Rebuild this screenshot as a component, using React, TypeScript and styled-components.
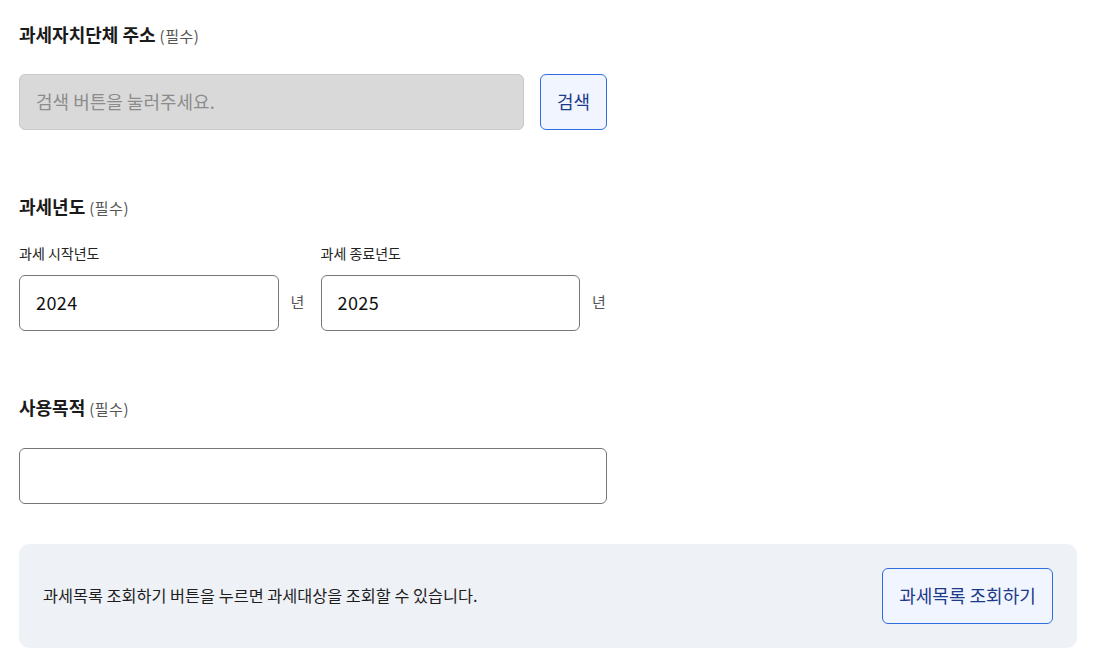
import React from "react";
import styled, { createGlobalStyle } from "styled-components";

const Global = createGlobalStyle`
  html, body { margin: 0; padding: 0; background: #fff; }
  body { font-family: "Noto Sans CJK KR", "Noto Sans", sans-serif; color: #1a1a1a; }
  * { box-sizing: border-box; }
`;

const Page = styled.div`
  padding: 22px 19px 0 19px;
  display: flex;
  flex-direction: column;
`;

const Section = styled.section<{ $gap?: number }>`
  width: 588px;
  display: flex;
  flex-direction: column;
  margin-bottom: ${(p) => p.$gap ?? 64}px;
`;

const Title = styled.div<{ $mb: number }>`
  font-size: 18px;
  font-weight: 700;
  line-height: 24px;
  height: 24px;
  color: #1a1a1a;
  margin-bottom: ${(p) => p.$mb}px;
`;

const Req = styled.span`
  font-size: 15px;
  font-weight: 400;
  line-height: 1;
  color: #555;
  margin-left: 4px;
  letter-spacing: 0.5px;
`;

const Row = styled.div`
  display: flex;
  align-items: center;
  gap: 16px;
`;

const Input = styled.input<{ $disabled?: boolean }>`
  height: 56px;
  flex: 1 1 auto;
  width: 100%;
  min-width: 0;
  border: 1px solid ${(p) => (p.$disabled ? "#c9c9c9" : "#767676")};
  background: ${(p) => (p.$disabled ? "#d9d9d9" : "#fff")};
  border-radius: 6px;
  padding: 0 16px 3px 16px;
  font-family: inherit;
  font-size: 18px;
  letter-spacing: 0.4px;
  color: #111;
  outline: none;
  &::placeholder { color: #8c8c8c; letter-spacing: 0; }
`;

const Button = styled.button<{ $w: number }>`
  height: 56px;
  width: ${(p) => p.$w}px;
  flex: none;
  border: 1px solid #2f6ee0;
  background: #f1f5ff;
  border-radius: 6px;
  font-family: inherit;
  font-size: 18px;
  color: #1d3a8a;
  cursor: pointer;
  padding: 0 0 2px 0;
`;

const YearGrid = styled.div`
  display: grid;
  grid-template-columns: 1fr 1fr;
  gap: 15px;
`;

const YearCol = styled.div`
  display: flex;
  flex-direction: column;
`;

const SubLabel = styled.div`
  font-size: 14px;
  line-height: 20px;
  color: #222;
  margin-bottom: 12px;
`;

const YearRow = styled.div`
  display: flex;
  align-items: center;
  gap: 12px;
`;

const Unit = styled.span`
  font-size: 15px;
  color: #555;
  width: 15px;
  flex: none;
  padding-bottom: 3px;
`;

const InfoBox = styled.div`
  width: 1058px;
  height: 104px;
  background: #eef1f6;
  border-radius: 10px;
  display: flex;
  align-items: center;
  justify-content: space-between;
  padding: 0 24px;
`;

const InfoText = styled.p`
  margin: 0 0 3px 0;
  font-size: 16.3px;
  color: #1e1e1e;
`;

export default function App() {
  return (
    <>
      <Global />
      <Page>
        <Section>
          <Title $mb={28}>
            과세자치단체 주소<Req>(필수)</Req>
          </Title>
          <Row>
            <Input $disabled disabled placeholder="검색 버튼을 눌러주세요." />
            <Button $w={67}>검색</Button>
          </Row>
        </Section>

        <Section>
          <Title $mb={25}>
            과세년도<Req>(필수)</Req>
          </Title>
          <YearGrid>
            <YearCol>
              <SubLabel>과세 시작년도</SubLabel>
              <YearRow>
                <Input defaultValue="2024" />
                <Unit>년</Unit>
              </YearRow>
            </YearCol>
            <YearCol>
              <SubLabel>과세 종료년도</SubLabel>
              <YearRow>
                <Input defaultValue="2025" />
                <Unit>년</Unit>
              </YearRow>
            </YearCol>
          </YearGrid>
        </Section>

        <Section $gap={40}>
          <Title $mb={29}>
            사용목적<Req>(필수)</Req>
          </Title>
          <Input />
        </Section>

        <InfoBox>
          <InfoText>과세목록 조회하기 버튼을 누르면 과세대상을 조회할 수 있습니다.</InfoText>
          <Button $w={171}>과세목록 조회하기</Button>
        </InfoBox>
      </Page>
    </>
  );
}
